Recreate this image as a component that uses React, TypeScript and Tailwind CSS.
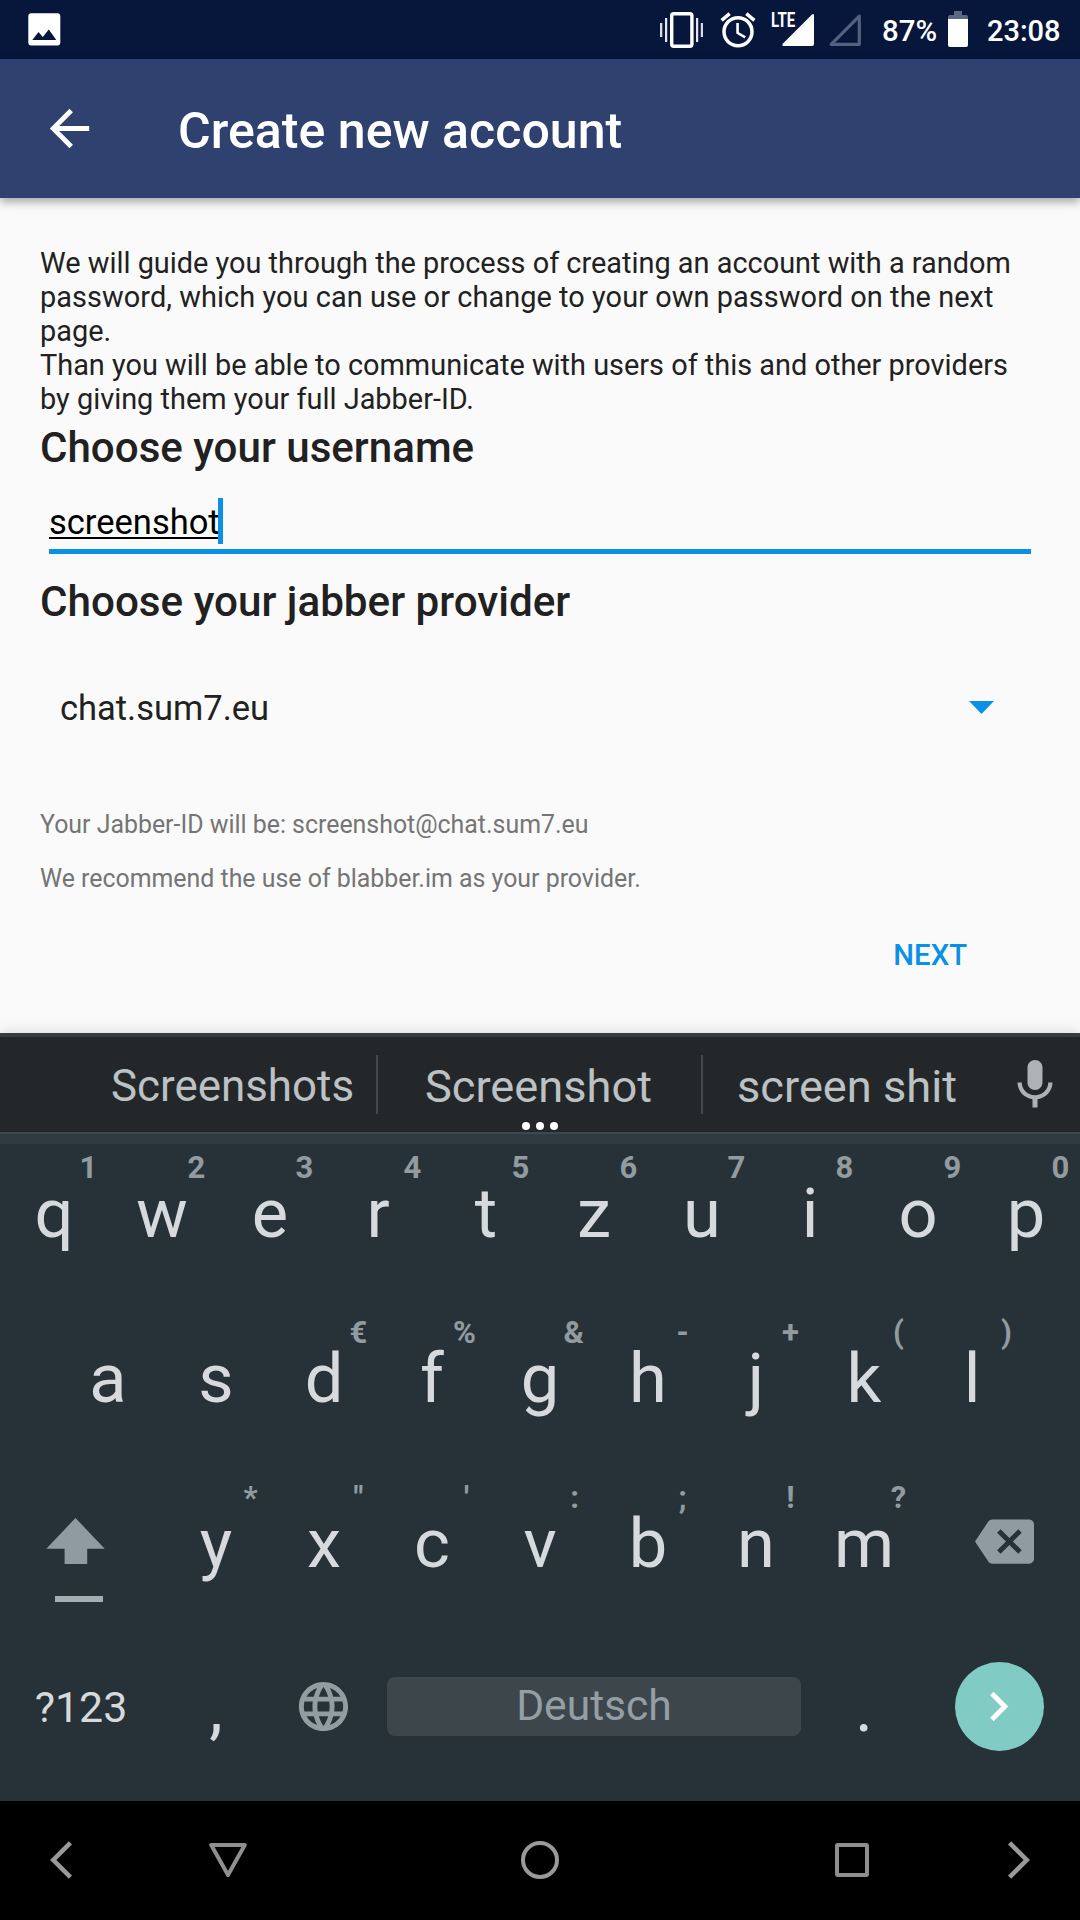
import type { ReactNode } from "react";
import { MdAccessAlarm, MdBackspace, MdChevronRight, MdLanguage } from "react-icons/md";

function VibrateIcon() {
  return (
    <svg width="43" height="36" viewBox="0 0 43 36" fill="white">
      <rect x="0" y="11" width="2.3" height="14" opacity="0.85" />
      <rect x="5" y="6" width="2.2" height="24" opacity="0.9" />
      <rect x="11.7" y="1.7" width="20.2" height="32.6" rx="2" fill="none" stroke="white" strokeWidth="3.4" />
      <rect x="36" y="6" width="2.2" height="24" opacity="0.9" />
      <rect x="40.8" y="11" width="2.2" height="14" opacity="0.85" />
    </svg>
  );
}

function StatusBar() {
  return (
    <div className="flex h-[59px] items-start bg-[#07173c] text-white">
      <svg className="mt-[13px] ml-7" width="33" height="33" viewBox="0 0 33 33">
        <rect x="0.3" y="0.3" width="32" height="32.2" rx="3" fill="white" />
        <path d="M4.3 27 L10.5 19 L14.8 24 L20.8 16.4 L28.3 27 Z" fill="#07173c" />
      </svg>
      <div className="mt-3 ml-[599px]">
        <VibrateIcon />
      </div>
      <MdAccessAlarm className="-mt-px ml-[14px] shrink-0 pt-[10px] box-content" size={42} />
      <div className="mt-3 ml-[12px] flex w-[43px] items-start">
        <span className="mt-px w-[24px] origin-left scale-x-[0.73] text-[20.6px] leading-[15px] font-bold">LTE</span>
        <svg className="mt-0.5 -ml-[13px] shrink-0" width="32" height="32" viewBox="0 0 32 32" fill="white">
          <path d="M30 0.5 L1 29.5 Q-0.8 32 2 32 H30 Q32 32 32 30 V1.5 Q31.8 -0.8 30 0.5Z" />
        </svg>
      </div>
      <svg className="mt-3.5 ml-[15px] shrink-0" width="32" height="32" viewBox="0 0 32 32" fill="none" stroke="#56607c" strokeWidth="3.2" strokeLinejoin="round">
        <path d="M30.3 2.2 V30.3 H2.2 Z" />
      </svg>
      <span className="mt-[14px] ml-[21px] w-[55px] text-[29.4px] leading-[35px] font-medium">87%</span>
      <svg className="mt-[11px] ml-[11px] shrink-0" width="20" height="36" viewBox="0 0 20 36">
        <path d="M6 0 H14 V4 H18 Q20 4 20 6 V9 H0 V6 Q0 4 2 4 H6 Z" fill="#5c6685" />
        <path d="M0 8 H20 V34 Q20 36 18 36 H2 Q0 36 0 34 Z" fill="white" />
      </svg>
      <span className="mt-[14px] ml-[19px] text-[29px] leading-[35px] font-medium">23:08</span>
    </div>
  );
}

function AppBar() {
  return (
    <header className="relative flex h-[139px] items-center bg-[#2f416f] text-white shadow-[0_4px_9px_rgba(0,0,0,0.34)]">
      <svg className="ml-10 -mt-px" width="59" height="59" viewBox="0 0 24 24" fill="white">
        <path d="M20,11L7.8,11l5.6,-5.6L12,4l-8,8l8,8l1.4,-1.4L7.8,13L20,13L20,11z" />
      </svg>
      <h1 className="mt-[5px] ml-[79px] text-[50.1px] leading-[60px] font-medium">Create new account</h1>
    </header>
  );
}

function AccountForm() {
  return (
    <main className="flex h-[835px] flex-col bg-[#fafafa] px-10 pt-12 text-[#212121]">
      <p className="text-[28.9px] leading-[34px] whitespace-nowrap">
        We will guide you through the process of creating an account with a random
        <br />
        <span className="tracking-[0.065px]">password, which you can use or change to your own password on the next</span>
        <br />
        page.
        <br />
        Than you will be able to communicate with users of this and other providers
        <br />
        by giving them your full Jabber-ID.
      </p>
      <h2 className="mt-2 text-[42.1px] leading-[48px] font-medium">Choose your username</h2>
      <div className="mt-[26px] ml-[9px] mr-[9px] flex h-[56px] items-start border-b-[5px] border-[#0b90e8]">
        <span className="pt-px text-[34.5px] leading-[46px] text-black underline decoration-2 underline-offset-[3px] [text-decoration-skip-ink:none]">
          screenshot
        </span>
        <span className="-ml-[2px] h-[46px] w-[5px] bg-[#0b90e8]" />
      </div>
      <h2 className="mt-6 text-[42.2px] leading-[48px] font-medium">Choose your jabber provider</h2>
      <div className="flex h-[164px] items-center justify-between pr-[46px] pl-[20px]">
        <span className="text-[34.5px] leading-[46px]">chat.sum7.eu</span>
        <svg className="mb-[2px]" width="25" height="13" viewBox="0 0 25 13" fill="#0b90e8">
          <path d="M0 0 H25 L12.5 13 Z" />
        </svg>
      </div>
      <p className="mt-5 text-[24.9px] leading-[30px] text-[#757575]">
        Your Jabber-ID will be: screenshot@chat.sum7.eu
      </p>
      <p className="mt-6 text-[24.9px] leading-[30px] text-[#757575]">
        We recommend the use of blabber.im as your provider.
      </p>
      <button className="mt-11 mr-[73px] -translate-x-0 self-end text-[29.3px] leading-[34px] font-medium text-[#0b90e8]">NEXT</button>
    </main>
  );
}

function Suggestions() {
  return (
    <div className="relative flex h-[99px] items-center border-t-4 border-[#393c3e] bg-[#23272a] pl-[88px] text-[45.2px] whitespace-nowrap text-[#bcc1c4]">
      <span className="w-[288px] pt-[5px] pl-px text-center text-[43.9px]">Screenshots</span>
      <span className="h-[59px] w-0.5 bg-[#43484b]" />
      <span className="w-[323px] pt-[5px] pr-[2px] text-center">Screenshot</span>
      <span className="h-[59px] w-0.5 bg-[#43484b]" />
      <span className="w-[287px] pt-[5px] pl-px text-center">screen shit</span>
      <svg className="ml-[15px]" width="60" height="60" viewBox="0 0 24 24" fill="#acb2b6">
        <path d="M12 14c1.66 0 2.99-1.34 2.99-3L15 5c0-1.66-1.34-3-3-3S9 3.34 9 5v6c0 1.66 1.34 3 3 3zm5.3-3c0 3-2.54 5.1-5.3 5.1S6.7 14 6.7 11H5c0 3.41 2.72 6.23 6 6.72V21h2v-3.28c3.28-.48 6-3.3 6-6.72h-1.7z" />
      </svg>
      <div className="absolute bottom-[2px] left-[522px] flex gap-[6px]">
        <i className="size-2 rounded-full bg-white" />
        <i className="size-2 rounded-full bg-white" />
        <i className="size-2 rounded-full bg-white" />
      </div>
    </div>
  );
}

function Key({ letter, hint }: { letter: string; hint?: string }) {
  return (
    <div className="relative w-[108px] text-center text-[68.6px] leading-[139px] text-[#d6dadd]">
      {letter}
      {hint && (
        <span className="absolute top-0 right-[10px] min-w-[19px] text-center text-[31px] leading-[47px] font-bold text-[#929b9f]">
          {hint}
        </span>
      )}
    </div>
  );
}

function KeyRow({ letters, hints, children }: { letters: string; hints: string; children?: ReactNode }) {
  return (
    <>
      {letters.split("").map((letter, i) => (
        <Key key={letter} letter={letter} hint={hints[i].trim()} />
      ))}
      {children}
    </>
  );
}

function Keyboard() {
  return (
    <section className="relative h-[768px] bg-[#273238] shadow-[0_-3px_12px_rgba(0,0,0,0.1)]">
      <Suggestions />
      <div className="h-3 border-t-2 border-[#3d494b] bg-[#303b41]" />
      <div className="flex h-[165px]">
        <KeyRow letters="qwertzuiop" hints="1234567890" />
      </div>
      <div className="flex h-[165px] justify-center">
        <KeyRow letters="asdfghjkl" hints="  €%&-+()" />
      </div>
      <div className="flex h-[165px]">
        <div className="w-[162px] pt-[44px]">
          <svg className="ml-[46px]" width="59" height="84" viewBox="0 0 59 84">
            <path d="M29.5 0 L58.7 30.7 H41.2 V46 H18.6 V30.7 H0.3 Z" fill="#8f9ba0" />
            <rect x="9" y="78" width="48" height="6" fill="#a3aeb3" />
          </svg>
        </div>
        <KeyRow letters="yxcvbnm" hints={"*\"':;!?"} />
        <MdBackspace className="mt-[38px] ml-[57px]" size={59} color="#8f9ba0" />
      </div>
      <div className="flex h-[134px] items-center text-[#d6dadd]">
        <span className="w-[162px] pt-px text-center text-[42.9px] leading-[50px]">?123</span>
        <span className="w-[108px] pt-[3px] text-center text-[68.6px] leading-[80px]">,</span>
        <div className="flex w-[108px] justify-center">
          <MdLanguage size={59} color="#929da2" className="mr-[2px]" />
        </div>
        <div className="mx-[9px] h-[59px] w-[414px] rounded-[8px] bg-[#3d474b] text-center text-[42.6px] leading-[57px] text-[#939fa4]">
          Deutsch
        </div>
        <span className="w-[108px] pt-[3px] text-center text-[68.6px] leading-[80px]">.</span>
        <div className="ml-[37px] flex size-[89px] items-center justify-center rounded-full bg-[#80cbc4]">
          <MdChevronRight size={59} color="white" className="-ml-[2px]" />
        </div>
      </div>
    </section>
  );
}

function NavigationBar() {
  return (
    <nav className="relative flex h-[119px] items-center bg-black pb-px">
      <svg className="ml-[50px]" width="22" height="38" viewBox="0 0 22 38" fill="none" stroke="#999999" strokeWidth="4.6">
        <path d="M20.4 1.8 L3.3 19 L20.4 36.2" />
      </svg>
      <svg className="ml-[137px]" width="38" height="34" viewBox="0 0 38 34" fill="none" stroke="#8f8f8f" strokeWidth="4" strokeLinejoin="round">
        <path d="M2.2 2 H35.8 L19 32 Z" />
      </svg>
      <div className="ml-[274px] size-[38px] rounded-full border-4 border-[#999999]" />
      <div className="ml-[276px] size-[34px] rounded-[3px] border-4 border-[#8f8f8f]" />
      <svg className="ml-[139px]" width="22" height="38" viewBox="0 0 22 38" fill="none" stroke="#999999" strokeWidth="4.6">
        <path d="M1.6 1.8 L18.7 19 L1.6 36.2" />
      </svg>
    </nav>
  );
}

export default function App() {
  return (
    <div className="flex h-[1920px] w-[1080px] flex-col overflow-hidden font-[Roboto,sans-serif]">
      <StatusBar />
      <AppBar />
      <AccountForm />
      <Keyboard />
      <NavigationBar />
    </div>
  );
}
